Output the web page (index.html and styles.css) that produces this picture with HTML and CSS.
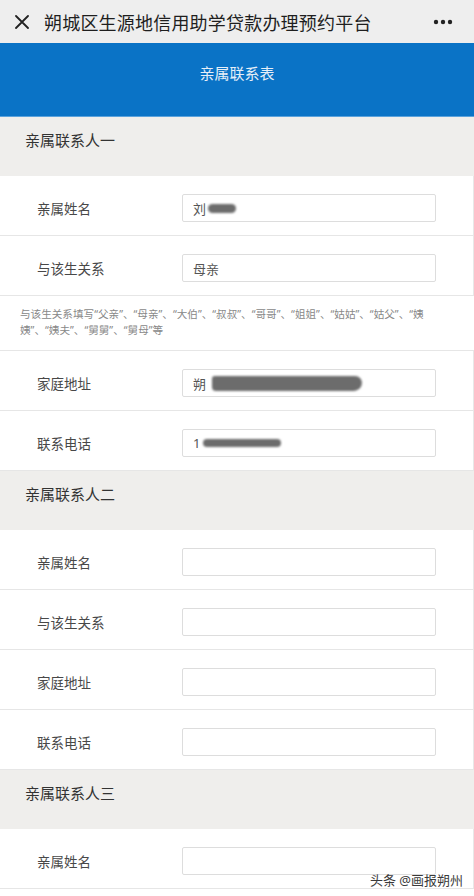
FILE: index.html
```html
<!DOCTYPE html>
<html lang="zh-CN">
<head>
    <meta charset="UTF-8">
    <meta name="viewport" content="width=device-width, initial-scale=1.0">
    <title>亲属联系表</title>
    <link rel="stylesheet" href="styles.css">
</head>
<body>
    <div class="page">
        <header class="topbar">
            <svg class="close-icon" width="14" height="14" viewBox="0 0 14 14">
                <path d="M1 1 L13 13 M13 1 L1 13" stroke="#222" stroke-width="1.8" fill="none" stroke-linecap="round"/>
            </svg>
            <h1 class="topbar-title">朔城区生源地信用助学贷款办理预约平台</h1>
            <svg class="more-icon" width="20" height="6" viewBox="0 0 20 6">
                <circle cx="3" cy="3" r="2.2" fill="#222"/>
                <circle cx="10" cy="3" r="2.2" fill="#222"/>
                <circle cx="17" cy="3" r="2.2" fill="#222"/>
            </svg>
        </header>

        <div class="banner">亲属联系表</div>

        <!-- 联系人一 -->
        <div class="group-title">亲属联系人一</div>
        <div class="field">
            <div class="field-label">亲属姓名</div>
            <div class="input">刘<span class="smudge smudge-name"></span></div>
        </div>
        <div class="field">
            <div class="field-label">与该生关系</div>
            <div class="input">母亲</div>
        </div>
        <div class="hint">与该生关系填写“父亲”、“母亲”、“大伯”、“叔叔”、“哥哥”、“姐姐”、“姑姑”、“姑父”、“姨姨”、“姨夫”、“舅舅”、“舅母”等</div>
        <div class="field">
            <div class="field-label">家庭地址</div>
            <div class="input">朔<span class="smudge smudge-address"></span></div>
        </div>
        <div class="field">
            <div class="field-label">联系电话</div>
            <div class="input">1<span class="smudge smudge-phone"></span></div>
        </div>

        <!-- 联系人二 -->
        <div class="group-title">亲属联系人二</div>
        <div class="field">
            <div class="field-label">亲属姓名</div>
            <div class="input"></div>
        </div>
        <div class="field">
            <div class="field-label">与该生关系</div>
            <div class="input"></div>
        </div>
        <div class="field">
            <div class="field-label">家庭地址</div>
            <div class="input"></div>
        </div>
        <div class="field">
            <div class="field-label">联系电话</div>
            <div class="input"></div>
        </div>

        <!-- 联系人三 -->
        <div class="group-title">亲属联系人三</div>
        <div class="field">
            <div class="field-label">亲属姓名</div>
            <div class="input"></div>
        </div>

        <div class="watermark">头条 @画报朔州</div>
    </div>
</body>
</html>
```

FILE: styles.css
```css
* {
    box-sizing: border-box;
    margin: 0;
    padding: 0;
}

body {
    font-family: "Noto Sans", "Noto Sans CJK SC", sans-serif;
    background-color: #ffffff;
    color: #333;
}

.page {
    position: relative;
    height: 896px;
    overflow: hidden;
}

.topbar {
    display: flex;
    align-items: center;
    height: 43px;
    background-color: #eeeeee;
    padding: 0 21px 0 15px;
}

.close-icon {
    flex: none;
    margin-right: 15px;
}

.topbar-title {
    flex: 1;
    font-size: 18px;
    font-weight: normal;
    color: #1e1e1e;
    letter-spacing: 0.2px;
}

.more-icon {
    flex: none;
}

.banner {
    height: 74px;
    background-color: #0a73c6;
    color: #e6eff8;
    font-size: 15px;
    text-align: center;
    padding-top: 19px;
    border-bottom: 1px solid #5aa2dc;
}

.group-title {
    height: 59px;
    background-color: #efeeec;
    font-size: 15px;
    line-height: 20px;
    color: #333;
    padding: 13px 25px;
}

.field {
    display: flex;
    align-items: center;
    height: 60px;
    padding: 5px 0 0 37px;
    border-bottom: 1px solid #e6e6e6;
    border-right: 1px solid #e8e8e8;
}

.field-label {
    width: 145px;
    font-size: 13.5px;
    color: #484848;
}

.input {
    display: flex;
    align-items: center;
    width: 254px;
    height: 28px;
    border: 1px solid #dddddd;
    border-radius: 2px;
    padding-left: 10px;
    font-size: 13px;
    color: #555;
}

.smudge {
    display: inline-block;
    background-color: #6c6c6c;
    border-radius: 8px;
    filter: blur(1px);
}

.smudge-name {
    width: 28px;
    height: 9px;
    margin-left: 2px;
}

.smudge-address {
    width: 150px;
    height: 15px;
    margin-left: 6px;
    border-radius: 4px 10px 12px 6px;
}

.smudge-phone {
    width: 78px;
    height: 8px;
    margin-left: 3px;
}

.hint {
    height: 55px;
    padding: 10px 40px 0 20px;
    font-size: 10.6px;
    line-height: 16px;
    color: #888;
    border-bottom: 1px solid #e6e6e6;
}

.watermark {
    position: absolute;
    right: 11px;
    bottom: 7px;
    font-size: 13px;
    color: #3a3a3a;
}
```
